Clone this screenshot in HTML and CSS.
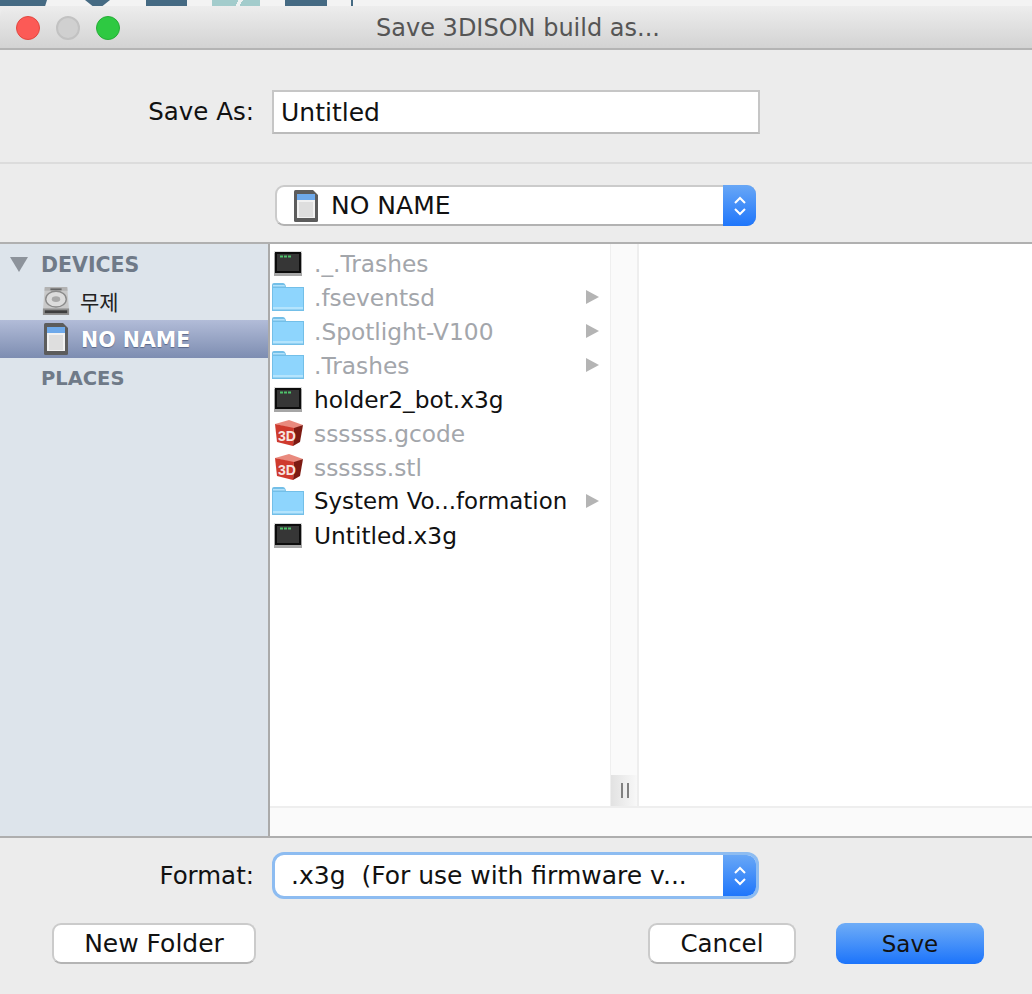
FILE: index.html
```html
<!DOCTYPE html>
<html lang="en">
<head>
<meta charset="utf-8">
<title>Save 3DISON build as...</title>
<link rel="stylesheet" href="styles.css">
</head>
<body>
<svg class="defs" width="0" height="0" aria-hidden="true">
  <symbol id="term" viewBox="0 0 32 30">
    <rect x="2" y="3" width="28" height="25" fill="#a6a6a6"/>
    <rect x="2" y="3" width="28" height="2" fill="#dcdcdc"/>
    <rect x="3" y="4" width="26" height="21" fill="#0c0c0c"/>
    <rect x="5" y="6" width="22" height="17" fill="#363636"/>
    <path d="M8 8.500h3M12 8.500h3M16 8.500h3" stroke="#4fc26b" stroke-width="2"/>
  </symbol>
  <symbol id="folder" viewBox="0 0 32 30">
    <path d="M0 29V3Q0 1 2 1H11Q12.500 1 13.500 3L14 5H32V29Z" fill="#73bfe8"/>
    <rect x="1" y="6" width="30" height="21" fill="#8ed5fd"/>
    <path d="M1 3H12.500L13 4.500H1Z" fill="#b3e2fb"/>
    <rect x="1" y="25" width="30" height="2.500" fill="#b4e4fd"/>
  </symbol>
  <symbol id="cube" viewBox="0 0 32 30">
    <path d="M3 6 17 2 31 7 22 11Z" fill="#e98a7e"/>
    <path d="M22 10 31 7 28 24 21 28Z" fill="#7d1a12"/>
    <path d="M3 6 22 10 21 28 5 24Z" fill="#cf3a2d"/>
  </symbol>
  <symbol id="sd" viewBox="0 0 24 32">
    <path d="M0 1.500Q0 0 1.500 0H19L24 5V30.500Q24 32 22.500 32H1.500Q0 32 0 30.500Z" fill="#5c5c5c"/>
    <rect x="3" y="4" width="18" height="24" fill="#f1f1f1"/>
    <rect x="3" y="4" width="18" height="6" fill="#6ea9ea"/>
    <rect x="5" y="12" width="14" height="15" fill="#dedede"/>
  </symbol>
  <symbol id="disk" viewBox="0 0 30 32">
    <path d="M3 1H27L29 26V31H1V26Z" fill="#c9c9c9"/>
    <path d="M3 1H27L27.400 5H2.600Z" fill="#b2b2b2"/>
    <ellipse cx="15" cy="14" rx="11" ry="8.500" fill="#dcdcdc" stroke="#8a8a8a" stroke-width="1.500"/>
    <ellipse cx="15" cy="14" rx="4.500" ry="3" fill="#a8a8a8"/>
    <rect x="1" y="24" width="28" height="7" fill="#8e8e8e"/>
    <rect x="3" y="26" width="24" height="3" fill="#3e3e3e"/>
    <path d="M9 3.500h12" stroke="#666" stroke-width="2"/>
  </symbol>
  <symbol id="updown" viewBox="0 0 14 22">
    <path d="M2 8 7 3 12 8M2 14 7 19 12 14" fill="none" stroke="#fff" stroke-width="2"/>
  </symbol>
</svg>

<div class="desktop">
  <i class="blob b1"></i><i class="blob b2"></i><i class="blob b3"></i><i class="blob b4"></i><i class="blob b5"></i><i class="blob b6"></i>
</div>

<div class="window">
  <header class="titlebar">
    <div class="lights">
      <span class="light red"></span><span class="light gray"></span><span class="light green"></span>
    </div>
    <h1 class="title">Save 3DISON build as...</h1>
  </header>

  <section class="name-row">
    <label class="label save-label">Save As:</label>
    <div class="text-input">Untitled</div>
  </section>

  <section class="location-row">
    <div class="select">
      <svg class="sd-small"><use href="#sd"/></svg>
      <span class="select-text">NO NAME</span>
      <span class="stepper"><svg class="updown"><use href="#updown"/></svg></span>
    </div>
  </section>

  <main class="browser">
    <aside class="sidebar">
      <div class="side-head first"><span class="tri-down"></span>DEVICES</div>
      <div class="side-item"><svg class="disk-icon"><use href="#disk"/></svg><span class="korean">무제</span></div>
      <div class="side-item selected"><svg class="sd-side"><use href="#sd"/></svg><span>NO NAME</span></div>
      <div class="side-head places">PLACES</div>
    </aside>
    <div class="files">
      <div class="columns">
        <ul class="column">
          <li class="row dim"><svg class="ficon"><use href="#term"/></svg><span>._.Trashes</span></li>
          <li class="row dim"><svg class="ficon"><use href="#folder"/></svg><span>.fseventsd</span><i class="arrow"></i></li>
          <li class="row dim"><svg class="ficon"><use href="#folder"/></svg><span>.Spotlight-V100</span><i class="arrow"></i></li>
          <li class="row dim"><svg class="ficon"><use href="#folder"/></svg><span>.Trashes</span><i class="arrow"></i></li>
          <li class="row"><svg class="ficon"><use href="#term"/></svg><span>holder2_bot.x3g</span></li>
          <li class="row dim"><svg class="ficon" viewBox="0 0 32 30"><use href="#cube"/><text x="6" y="23" class="cube-text">3D</text></svg><span>ssssss.gcode</span></li>
          <li class="row dim"><svg class="ficon" viewBox="0 0 32 30"><use href="#cube"/><text x="6" y="23" class="cube-text">3D</text></svg><span>ssssss.stl</span></li>
          <li class="row"><svg class="ficon"><use href="#folder"/></svg><span class="tight">System Vo...formation</span><i class="arrow"></i></li>
          <li class="row"><svg class="ficon"><use href="#term"/></svg><span>Untitled.x3g</span></li>
        </ul>
        <div class="resizer"><div class="grip"></div></div>
        <div class="column-empty"></div>
      </div>
      <div class="hscroll"></div>
    </div>
  </main>

  <footer class="footer">
    <div class="format-row">
      <label class="label format-label">Format:</label>
      <div class="select focused">
        <span class="select-text format-text">.x3g&nbsp; (For use with firmware v...</span>
        <span class="stepper"><svg class="updown"><use href="#updown"/></svg></span>
      </div>
    </div>
    <div class="button-row">
      <button class="btn new-folder">New Folder</button>
      <button class="btn cancel">Cancel</button>
      <button class="btn primary">Save</button>
    </div>
  </footer>
</div>
</body>
</html>
```

FILE: styles.css
```css
*, *::before, *::after { box-sizing: border-box; }
html, body { margin: 0; padding: 0; }
body {
  width: 1032px;
  height: 994px;
  overflow: hidden;
  background: #ececec;
  font-family: "DejaVu Sans", "Liberation Sans", sans-serif;
  font-size: 25px;
  color: #111;
}
.defs { display: block; height: 0; position: absolute; }
.cube-text { font: bold 14px "Liberation Sans", sans-serif; fill: #f6e4e0; }

.desktop {
  display: flex;
  height: 6px;
  background: #f3f3f3;
  overflow: hidden;
}
.blob { display: block; height: 6px; background: #456a83; flex: none; }
.b1 { width: 47px; clip-path: polygon(0 0, 100% 0, 96% 100%, 0 100%); }
.b2 { width: 25px; margin-left: 38px; clip-path: polygon(0 0, 100% 0, 70% 100%, 30% 100%); }
.b3 { width: 41px; margin-left: 36px; }
.b4 {
  width: 48px;
  margin-left: 25px;
  background: linear-gradient(120deg, #a3cccc 0 52%, #eef2f2 52% 60%, #a3cccc 60%);
}
.b5 { width: 42px; margin-left: 25px; }
.b6 { width: 2px; margin-left: 24px; }

.window { height: 988px; display: flex; flex-direction: column; }

.titlebar {
  height: 44px;
  flex: none;
  display: flex;
  align-items: center;
  background: linear-gradient(#ededed, #d3d3d3);
  border-bottom: 2px solid #b4b4b4;
  border-top-left-radius: 10px;
  padding-left: 16px;
}
.lights { display: flex; gap: 16px; margin-top: 2px; }
.light { width: 24px; height: 24px; border-radius: 50%; display: block; }
.red { background: #fc5a56; border: 1px solid #e2473f; }
.gray { background: #d0d0d0; border: 2px solid #c2c2c2; }
.green { background: #2ec942; border: 1px solid #25ad36; }
.title {
  margin: 2px 0 0 -116px;
  flex: 1;
  text-align: center;
  font-size: 24px;
  font-weight: normal;
  color: #555;
  line-height: 42px;
}

.name-row {
  height: 114px;
  flex: none;
  display: flex;
  align-items: flex-start;
  border-bottom: 2px solid #dcdcdc;
  padding-top: 40px;
}
.label {
  width: 254px;
  text-align: right;
  flex: none;
  font-size: 24.500px;
  line-height: 44px;
}
.text-input {
  margin-left: 18px;
  width: 488px;
  height: 44px;
  background: #fff;
  border: 2px solid #c6c6c6;
  border-bottom-color: #bbb;
  padding-left: 7px;
  line-height: 41px;
}

.location-row {
  height: 78px;
  flex: none;
  padding: 21px 0 0 275px;
}

.select {
  width: 481px;
  height: 41px;
  display: flex;
  align-items: center;
  background: #fff;
  border: 2px solid #cbcbcb;
  border-bottom-color: #b2b2b2;
  border-radius: 9px;
}
.sd-small { width: 24px; height: 32px; margin-left: 17px; flex: none; }
.select-text { margin-left: 13px; flex: 1; white-space: nowrap; }
.stepper {
  width: 33px;
  height: 41px;
  margin: -2px -2px -2px 0;
  flex: none;
  display: flex;
  align-items: center;
  justify-content: center;
  background: linear-gradient(#68a7f6, #1f76fb);
  border-radius: 0 9px 9px 0;
}
.updown { width: 14px; height: 22px; }

.browser {
  height: 596px;
  flex: none;
  display: flex;
  border-top: 2px solid #b0b0b0;
  border-bottom: 2px solid #aeaeae;
}
.sidebar {
  width: 270px;
  flex: none;
  background: #dde4eb;
  border-right: 2px solid #aaa;
  padding-top: 3px;
}
.side-head {
  height: 36px;
  display: flex;
  align-items: center;
  padding-left: 41px;
  font-weight: bold;
  font-size: 20.500px;
  color: #6f7a88;
  position: relative;
}
.first { height: 35px; }
.places { margin-top: 2px; font-size: 19.500px; }
.tri-down {
  position: absolute;
  left: 10px;
  top: 10px;
  width: 0;
  height: 0;
  border-left: 9px solid transparent;
  border-right: 9px solid transparent;
  border-top: 15px solid #8d939b;
}
.side-item {
  height: 38px;
  display: flex;
  align-items: center;
  font-size: 20.500px;
}
.disk-icon { width: 28px; height: 32px; margin-left: 42px; flex: none; }
.korean {
  margin-left: 10px;
  font-family: "Noto Sans CJK KR", "DejaVu Sans", sans-serif;
  font-size: 21px;
  color: #222;
}
.selected {
  background: linear-gradient(#b2bcd8, #7d8db1);
  color: #fff;
  font-weight: bold;
  text-shadow: 0 1px 1px #5a6788;
}
.selected span { margin-left: 13px; padding-top: 2px; }
.sd-side { width: 24px; height: 32px; margin-left: 44px; flex: none; }

.files { flex: 1; display: flex; flex-direction: column; background: #fff; }
.columns { height: 564px; flex: none; display: flex; border-bottom: 2px solid #eee; }
.column {
  width: 340px;
  flex: none;
  list-style: none;
  margin: 0;
  padding: 2px 0 0;
  font-size: 23.300px;
}
.row {
  height: 34px;
  display: flex;
  align-items: center;
  white-space: nowrap;
  position: relative;
}
.tight { font-size: 22.900px; }
.dim { color: #a3a6ab; }
.ficon { width: 32px; height: 30px; margin-left: 2px; margin-right: 10px; flex: none; }
.arrow {
  position: absolute;
  left: 316px;
  top: 10px;
  width: 0;
  height: 0;
  border-top: 7px solid transparent;
  border-bottom: 7px solid transparent;
  border-left: 13px solid #b4b4b4;
}
.resizer {
  width: 29px;
  flex: none;
  background: #fafafa;
  border-left: 1px solid #efefef;
  border-right: 2px solid #eee;
  display: flex;
  align-items: flex-end;
}
.grip {
  width: 100%;
  height: 31px;
  background: linear-gradient(90deg, #e2e2e2, #f8f8f8);
  position: relative;
}
.grip::after {
  content: "";
  position: absolute;
  left: 10px;
  top: 8px;
  width: 8px;
  height: 15px;
  border-left: 2px solid #808080;
  border-right: 2px solid #808080;
}
.column-empty { flex: 1; }
.hscroll { flex: 1; background: #fafafa; }

.footer { flex: 1; padding-top: 17px; }
.format-row { display: flex; align-items: center; height: 41px; }
.focused {
  margin-left: 21px;
  border-color: #fff;
  box-shadow: 0 0 0 3px #8dbcf1;
}
.format-text { margin-left: 14px; }
.button-row {
  display: flex;
  padding-left: 52px;
  margin-top: 27px;
}
.btn {
  height: 41px;
  font: inherit;
  font-size: 24.500px;
  color: #111;
  background: #fff;
  border: 2px solid #cbcbcb;
  border-bottom-color: #b4b4b4;
  border-radius: 9px;
  padding: 0;
}
.new-folder { width: 204px; font-size: 25px; }
.cancel { width: 148px; margin-left: 392px; }
.primary {
  width: 148px;
  margin-left: 40px;
  border: 0;
  font-size: 23px;
  background: linear-gradient(#6fadf7, #1c74fb);
}
```
